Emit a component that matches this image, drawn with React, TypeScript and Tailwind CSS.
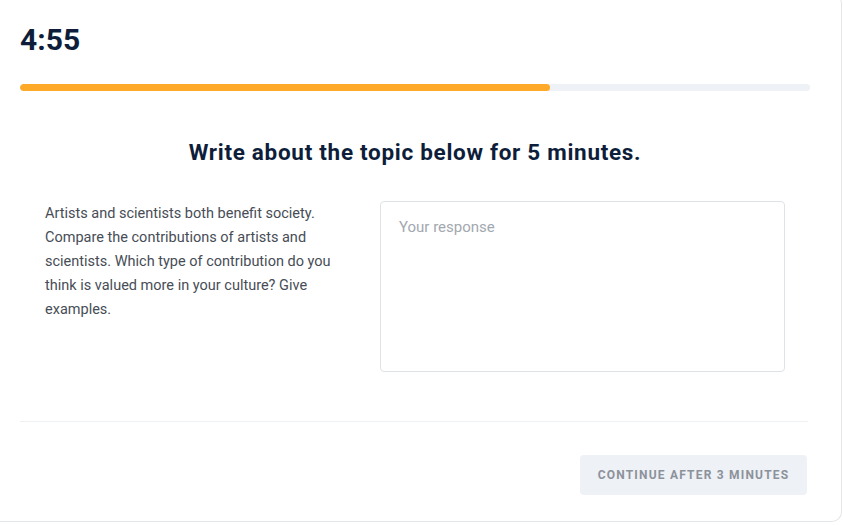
import React from "react";

export default function App() {
  return (
    <div className="w-[843px] h-[525px] bg-white overflow-hidden" style={{ fontFamily: "Roboto, 'Liberation Sans', sans-serif" }}>
      <div className="w-[842px] h-[528px] -mt-[6px] bg-white border-r border-b border-[#e3e6ea] rounded-tr-[10px] rounded-br-[10px] pl-[20px] pr-[31px] flex flex-col">
        <div className="pt-[28px] h-[90px] text-[30px] leading-[36px] font-bold text-[#0e1e3a]">4:55</div>
        <div className="h-[7px] w-full rounded-full bg-[#eef1f5] overflow-hidden">
          <div className="h-full w-[530px] rounded-full bg-[#ffa928]" />
        </div>
        <h1 className="mt-[46px] text-center text-[22.5px] leading-[30px] font-bold tracking-[0.7px] text-[#0e1e3a]">
          Write about the topic below for 5 minutes.
        </h1>
        <div className="mt-[34px] flex items-start">
          <p className="ml-[25px] w-[300px] mt-[1px] text-[14.5px] leading-[24px] text-[#474d56]">
            Artists and scientists both benefit society. Compare the contributions of artists and scientists. Which type of contribution do you think is valued more in your culture? Give examples.
          </p>
          <div className="ml-[35px] w-[405px] h-[171px] rounded-[4px] border border-[#dfe3e7] pl-[18px] pt-[15px] text-[15px] leading-[20px] text-[#a2a8b0]">
            Your response
          </div>
        </div>
        <div className="mt-[49px] h-px w-[788px] bg-[#eef1f4]" />
        <div className="mt-[33px] flex justify-end">
          <div className="mr-[3px] w-[227px] h-[40px] rounded-[4px] bg-[#eef1f5] flex items-center justify-center text-[12px] font-bold tracking-[0.1em] text-[#8c929b]">
            CONTINUE AFTER 3 MINUTES
          </div>
        </div>
      </div>
    </div>
  );
}
